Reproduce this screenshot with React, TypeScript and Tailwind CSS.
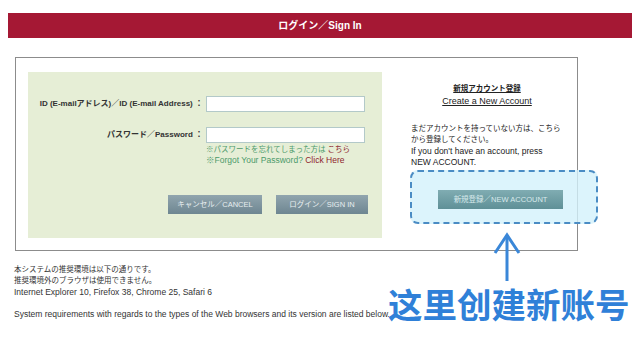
export default function App() {
  return (
    <div className="relative h-[360px] w-[640px] overflow-hidden bg-white font-['Liberation_Sans','Noto_Sans_CJK_JP',sans-serif] text-[#333]">
      {/* Title bar */}
      <div className="mx-[8px] mt-[13px] flex h-[25px] items-center justify-center bg-[#a51834] text-[10px] font-bold text-white">
        ログイン／Sign In
      </div>

      {/* Login box */}
      <div className="ml-[15px] mt-[19px] flex h-[194px] w-[563px] border border-[#8c8c8c]">
        <div className="ml-[12px] mt-[14px] h-[166px] w-[354px] bg-[#e6eed6] pt-[24px]">
          <div className="flex h-[16px] items-center">
            <div className="w-[175px] text-right text-[8px] font-bold">ID (E-mailアドレス)／ID (E-mail Address) ：</div>
            <input className="ml-[3px] h-[16px] w-[159px] border border-[#b3c9c9] bg-white outline-none" />
          </div>
          <div className="mt-[15px] flex h-[16px] items-center">
            <div className="w-[175px] text-right text-[8px] font-bold">パスワード／Password ：</div>
            <input type="password" className="ml-[3px] h-[16px] w-[159px] border border-[#b3c9c9] bg-white outline-none" />
          </div>
          <div className="ml-[178px] mt-[1px] text-[7.5px] leading-[11px] text-[#4c9a6a]">
            <div>
              ※パスワードを忘れてしまった方は <span className="text-[#8e1d2d]">こちら</span>
            </div>
            <div className="text-[8.5px]">
              ※Forgot Your Password? <span className="text-[#8e1d2d]">Click Here</span>
            </div>
          </div>
          <div className="ml-[140px] mt-[29px] flex gap-[14px]">
            <button className="flex h-[19px] w-[94px] items-center justify-center bg-gradient-to-b from-[#91a5ae] to-[#6e8691] text-[7.5px] text-[#e8eef0]">
              キャンセル／CANCEL
            </button>
            <button className="flex h-[19px] w-[92px] items-center justify-center bg-gradient-to-b from-[#91a5ae] to-[#6e8691] text-[7.5px] text-[#e8eef0]">
              ログイン／SIGN IN
            </button>
          </div>
        </div>

        <div className="ml-[29px] w-[160px] pt-[24px] text-[7.5px] text-[#222]">
          <div className="w-[152px] text-center leading-[13px] underline">
            <div className="font-bold">新規アカウント登録</div>
            <div className="text-[9px]">Create a New Account</div>
          </div>
          <div className="mt-[16px] leading-[10.8px]">
            まだアカウントを持っていない方は、こちら
            <br />
            から登録してください。
            <br />
            <span className="text-[8.5px]">If you don't have an account, press</span>
            <br />
            <span className="text-[8.5px]">NEW ACCOUNT.</span>
          </div>
          <button className="relative z-10 ml-[27px] mt-[21px] flex h-[19px] w-[125px] items-center justify-center bg-gradient-to-b from-[#80acb2] to-[#5f9097] text-[7.5px] text-[#d8eaec]">
            新規登録／NEW ACCOUNT
          </button>
        </div>
      </div>

      {/* Notes */}
      <div className="ml-[14px] mt-[13px] text-[7.5px] leading-[11.3px] text-[#333]">
        <div>本システムの推奨環境は以下の通りです。</div>
        <div>推奨環境外のブラウザは使用できません。</div>
        <div className="text-[8.5px]">Internet Explorer 10, Firefox 38, Chrome 25, Safari 6</div>
        <div className="mt-[11px] text-[8.5px]">System requirements with regards to the types of the Web browsers and its version are listed below.</div>
      </div>

      {/* Annotation overlay */}
      <div className="absolute left-[410px] top-[170px] h-[54px] w-[188px] rounded-[8px] border-2 border-dashed border-[#4a8cc4] bg-[#d3f1fb]/80" />
      <svg className="absolute left-[493px] top-[231px]" width="28" height="52" viewBox="0 0 28 52">
        <path d="M14 4 L14 50" stroke="#3a87d8" strokeWidth="3" fill="none" />
        <path d="M2 22 L14 4 L26 22" stroke="#3a87d8" strokeWidth="3" fill="none" strokeLinejoin="miter" />
      </svg>
      <div className="absolute left-[388px] top-[286px] font-['Noto_Sans_CJK_SC',sans-serif] text-[34.5px] font-bold leading-none text-[#2f80d8]">
        这里创建新账号
      </div>
    </div>
  )
}
